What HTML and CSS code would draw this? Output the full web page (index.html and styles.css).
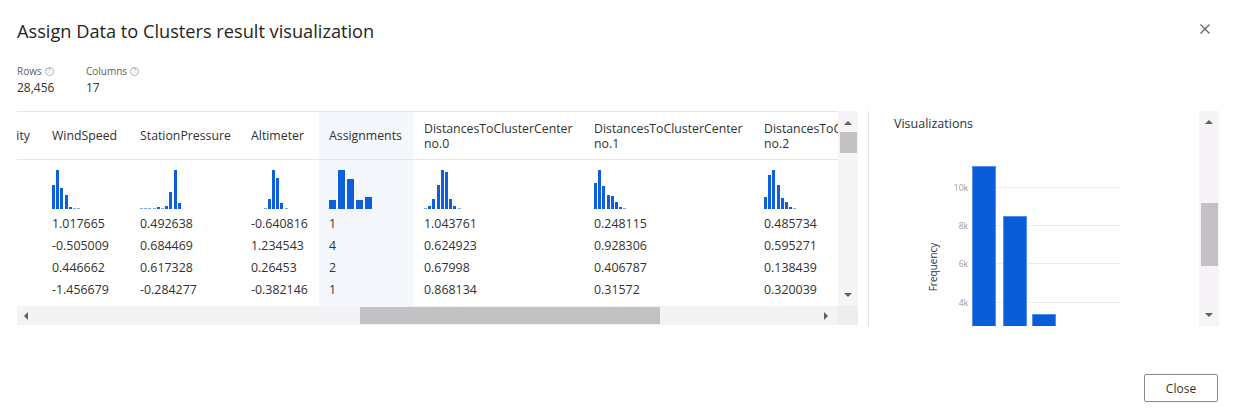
FILE: index.html
```html
<!DOCTYPE html>
<html lang="en">
<head>
<meta charset="utf-8">
<title>Assign Data to Clusters result visualization</title>
<link rel="stylesheet" href="styles.css">
</head>
<body>
<div class="dialog">
  <div class="dlg-head">
    <h1 class="title">Assign Data to Clusters result visualization</h1>
    <button class="icon-close" aria-label="Close">
      <svg width="10" height="10" viewBox="0 0 10 10"><path d="M0.5 0.5L9.5 9.5M9.5 0.5L0.5 9.5" stroke="#605e5c" stroke-width="1.2" fill="none"/></svg>
    </button>
  </div>

  <div class="stats">
    <div class="stat">
      <div class="stat-label">Rows <span class="qmark">?</span></div>
      <div class="stat-value">28,456</div>
    </div>
    <div class="stat">
      <div class="stat-label">Columns <span class="qmark">?</span></div>
      <div class="stat-value">17</div>
    </div>
  </div>

  <div class="content">
    <div class="grid-pane">
      <div class="grid">
        <div class="grid-main">
          <div class="viewport">
            <div class="col col-clip">
              <div class="hcell">RelativeHumidity</div>
            </div>

            <div class="col w88">
              <div class="hcell">WindSpeed</div>
              <div class="hist">
                <i style="height:24px"></i><i style="height:39px"></i><i style="height:21px"></i><i style="height:14px"></i><i style="height:2px"></i><i class="faint" style="height:1px"></i><i class="faint" style="height:1px"></i>
              </div>
              <div class="vcell">1.017665</div>
              <div class="vcell">-0.505009</div>
              <div class="vcell">0.446662</div>
              <div class="vcell">-1.456679</div>
            </div>

            <div class="col w111">
              <div class="hcell">StationPressure</div>
              <div class="hist">
                <i class="faint" style="height:1px"></i><i class="faint" style="height:1px"></i><i class="faint" style="height:1px"></i><i class="faint" style="height:1px"></i><i style="height:2px"></i><i class="faint" style="height:1px"></i><i style="height:3px"></i><i style="height:17px"></i><i style="height:39px"></i><i style="height:6px"></i>
              </div>
              <div class="vcell">0.492638</div>
              <div class="vcell">0.684469</div>
              <div class="vcell">0.617328</div>
              <div class="vcell">-0.284277</div>
            </div>

            <div class="col w78">
              <div class="hcell">Altimeter</div>
              <div class="hist">
                <i style="height:0px"></i><i style="height:0px"></i><i style="height:0px"></i><i class="faint" style="height:1px"></i><i style="height:10px"></i><i style="height:39px"></i><i style="height:31px"></i><i style="height:6px"></i><i class="faint" style="height:1px"></i>
              </div>
              <div class="vcell">-0.640816</div>
              <div class="vcell">1.234543</div>
              <div class="vcell">0.26453</div>
              <div class="vcell">-0.382146</div>
            </div>

            <div class="col w95 selected">
              <div class="hcell">Assignments</div>
              <div class="hist wide">
                <i style="height:9px"></i><i style="height:39px"></i><i style="height:30px"></i><i style="height:9px"></i><i style="height:12px"></i>
              </div>
              <div class="vcell">1</div>
              <div class="vcell">4</div>
              <div class="vcell">2</div>
              <div class="vcell">1</div>
            </div>

            <div class="col w170">
              <div class="hcell">DistancesToClusterCenter no.0</div>
              <div class="hist">
                <i class="faint" style="height:1px"></i><i style="height:3px"></i><i style="height:10px"></i><i style="height:24px"></i><i style="height:39px"></i><i style="height:37px"></i><i style="height:10px"></i><i style="height:3px"></i><i class="faint" style="height:1px"></i>
              </div>
              <div class="vcell">1.043761</div>
              <div class="vcell">0.624923</div>
              <div class="vcell">0.67998</div>
              <div class="vcell">0.868134</div>
            </div>

            <div class="col w170">
              <div class="hcell">DistancesToClusterCenter no.1</div>
              <div class="hist">
                <i style="height:26px"></i><i style="height:39px"></i><i style="height:23px"></i><i style="height:14px"></i><i style="height:13px"></i><i style="height:7px"></i><i style="height:2px"></i><i class="faint" style="height:1px"></i>
              </div>
              <div class="vcell">0.248115</div>
              <div class="vcell">0.928306</div>
              <div class="vcell">0.406787</div>
              <div class="vcell">0.31572</div>
            </div>

            <div class="col w170">
              <div class="hcell">DistancesToClusterCenter no.2</div>
              <div class="hist">
                <i style="height:12px"></i><i style="height:34px"></i><i style="height:39px"></i><i style="height:24px"></i><i style="height:11px"></i><i style="height:7px"></i><i style="height:2px"></i><i class="faint" style="height:1px"></i>
              </div>
              <div class="vcell">0.485734</div>
              <div class="vcell">0.595271</div>
              <div class="vcell">0.138439</div>
              <div class="vcell">0.320039</div>
            </div>
          </div>

          <div class="vscroll">
            <span class="arr-up"></span>
            <span class="vthumb"></span>
            <span class="spacer"></span>
            <span class="arr-down"></span>
          </div>
        </div>

        <div class="hscroll-row">
          <div class="hscroll">
            <span class="arr-left"></span>
            <span class="hthumb"></span>
            <span class="spacer"></span>
            <span class="arr-right"></span>
          </div>
          <div class="corner"></div>
        </div>
      </div>
    </div>

    <div class="viz">
      <div class="viz-body">
        <div class="viz-title">Visualizations</div>
        <svg class="chart" width="305" height="191" viewBox="0 0 305 191">
          <g stroke="#ececec" stroke-width="1">
            <line x1="78" y1="52.5" x2="226" y2="52.5"/>
            <line x1="78" y1="90.5" x2="226" y2="90.5"/>
            <line x1="78" y1="128.5" x2="226" y2="128.5"/>
            <line x1="78" y1="167.5" x2="226" y2="167.5"/>
          </g>
          <g font-family="Open Sans, sans-serif" font-size="8.5" fill="#9a9a9a" text-anchor="end">
            <text x="74" y="55.5">10k</text>
            <text x="74" y="93.5">8k</text>
            <text x="74" y="131.5">6k</text>
            <text x="74" y="170.5">4k</text>
          </g>
          <text x="0" y="0" transform="translate(43 132) rotate(-90)" font-family="Open Sans, sans-serif" font-size="10" fill="#333" text-anchor="middle">Frequency</text>
          <g fill="#0b5cd9" stroke="#4f8ff0" stroke-width="1">
            <rect x="78.5" y="31.5" width="23" height="170"/>
            <rect x="109.5" y="81.5" width="23" height="120"/>
            <rect x="138.5" y="179.5" width="23" height="30"/>
          </g>
        </svg>
      </div>
      <div class="vscroll-r">
        <span class="arr-up"></span>
        <span class="vthumb-r"></span>
        <span class="spacer"></span>
        <span class="arr-down"></span>
      </div>
    </div>
  </div>

  <div class="footer">
    <button class="btn">Close</button>
  </div>
</div>
</body>
</html>
```

FILE: styles.css
```css
* { box-sizing: border-box; }

html, body {
  margin: 0;
  padding: 0;
  background: #ffffff;
}

body {
  font-family: "Open Sans", "Noto Sans", sans-serif;
  color: #323130;
  width: 1235px;
  height: 417px;
  overflow: hidden;
}

.dialog {
  padding: 19px 16px 0 17px;
}

.dlg-head {
  display: flex;
  justify-content: space-between;
  align-items: flex-start;
  height: 24px;
}

.title {
  margin: 0;
  font-size: 18.2px;
  font-weight: 400;
  line-height: 24px;
  color: #252423;
  white-space: nowrap;
}

.icon-close {
  width: 20px;
  height: 20px;
  margin-right: 4px;
  padding: 0;
  border: 0;
  background: transparent;
  display: flex;
  align-items: center;
  justify-content: center;
}

.stats {
  display: grid;
  grid-template-columns: 69px auto;
  justify-content: start;
  margin-top: 21px;
}

.stat-label {
  font-size: 10px;
  line-height: 14px;
  color: #605e5c;
  display: flex;
  align-items: center;
}

.qmark {
  display: inline-flex;
  align-items: center;
  justify-content: center;
  width: 9px;
  height: 9px;
  margin-left: 3px;
  border: 1px solid #b3b0ad;
  border-radius: 50%;
  font-size: 6.5px;
  line-height: 1;
  color: #a19f9d;
}

.stat-value {
  font-size: 12px;
  line-height: 20px;
  color: #323130;
}

.content {
  display: flex;
  margin-top: 13px;
  height: 215px;
}

.grid-pane {
  border-right: 1px solid #e3e3e3;
  padding-right: 10px;
}

.grid {
  width: 841px;
  display: flex;
  flex-direction: column;
  height: 214px;
}

.grid-main {
  display: flex;
  height: 195px;
}

.viewport {
  width: 821px;
  overflow: hidden;
  border-top: 1px solid #e6e6e6;
  display: flex;
  align-items: stretch;
}

.col {
  flex: none;
  display: flex;
  flex-direction: column;
}

.w88 { width: 88px; }
.w111 { width: 111px; }
.w78 { width: 78px; }
.w95 { width: 95px; }
.w170 { width: 170px; }

.col.selected {
  background: #f4f8fd;
}

.col-clip {
  width: 25px;
}

.hcell {
  height: 48px;
  border-bottom: 1px solid #e6e6e6;
  display: flex;
  align-items: center;
  padding: 0 10px;
  font-size: 12.3px;
  line-height: 15px;
  color: #323130;
}

.col-clip .hcell {
  justify-content: flex-end;
  white-space: nowrap;
  padding: 0 12px 0 0;
}

.hist {
  height: 53px;
  display: flex;
  align-items: flex-end;
  gap: 1.2px;
  padding: 0 0 4px 10px;
}

.hist i {
  display: block;
  width: 3px;
  background: #0f5fdc;
}

.hist i.faint {
  background: #7fa8ee;
}

.hist.wide {
  gap: 2px;
}

.hist.wide i {
  width: 7px;
}

.vcell {
  height: 22px;
  line-height: 22px;
  padding-left: 10px;
  font-size: 12.4px;
  color: #323130;
  white-space: nowrap;
}

.vscroll,
.vscroll-r {
  width: 20px;
  flex: none;
  background: #f6f4f6;
  display: flex;
  flex-direction: column;
  align-items: center;
}

.vscroll {
  padding: 10px 0 9px;
}

.vscroll-r {
  padding: 9px 0 9px;
}

.spacer {
  flex: 1;
}

.arr-up {
  width: 0;
  height: 0;
  border-left: 4px solid transparent;
  border-right: 4px solid transparent;
  border-bottom: 4px solid #606060;
}

.arr-down {
  width: 0;
  height: 0;
  border-left: 4px solid transparent;
  border-right: 4px solid transparent;
  border-top: 4px solid #606060;
}

.arr-left {
  width: 0;
  height: 0;
  border-top: 4px solid transparent;
  border-bottom: 4px solid transparent;
  border-right: 4px solid #606060;
}

.arr-right {
  width: 0;
  height: 0;
  border-top: 4px solid transparent;
  border-bottom: 4px solid transparent;
  border-left: 4px solid #606060;
}

.vthumb {
  width: 17px;
  height: 21px;
  margin-top: 7px;
  background: #c3c1c3;
}

.vthumb-r {
  width: 17px;
  height: 63px;
  margin-top: 79px;
  background: #c3c1c3;
}

.hscroll-row {
  display: flex;
  height: 19px;
}

.hscroll {
  width: 821px;
  background: #f4f2f4;
  display: flex;
  align-items: center;
  padding: 0 10px 0 7px;
}

.hthumb {
  width: 300px;
  height: 17px;
  margin-left: 332px;
  background: #c3c1c3;
}

.corner {
  width: 20px;
  background: #eeecee;
}

.viz {
  flex: 1;
  display: flex;
}

.viz-body {
  flex: 1;
  overflow: hidden;
  padding: 4px 0 0 25px;
}

.viz-title {
  font-size: 12.5px;
  line-height: 18px;
  color: #323130;
}

.chart {
  display: block;
  margin-top: 2px;
}

.footer {
  display: flex;
  justify-content: flex-end;
  margin-top: 48px;
  padding-right: 1px;
}

.btn {
  width: 74px;
  height: 28px;
  border: 1px solid #8a8886;
  border-radius: 2px;
  background: #ffffff;
  font-family: "Open Sans", "Noto Sans", sans-serif;
  font-size: 12px;
  color: #323130;
  padding: 0;
}
```
